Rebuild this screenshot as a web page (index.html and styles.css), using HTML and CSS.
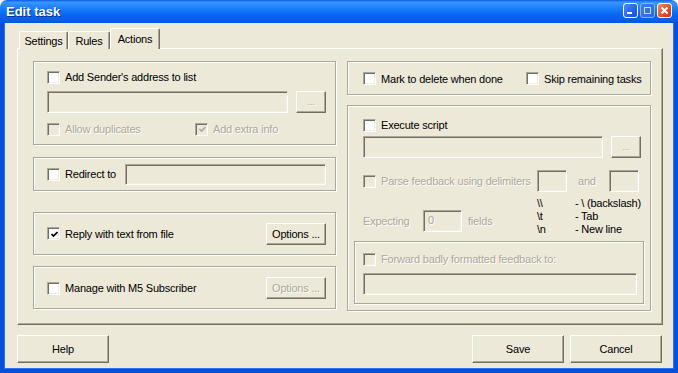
FILE: index.html
```html
<!DOCTYPE html>
<html>
<head>
<meta charset="utf-8">
<link rel="stylesheet" href="styles.css">
</head>
<body>
<div class="window">
  <div class="titlebar">
    <span class="title">Edit task</span>
    <div class="tb-buttons">
      <span class="tb-btn tb-min"><svg width="13" height="13" viewBox="0 0 13 13"><rect x="3" y="8" width="5" height="2" fill="#fff"/></svg></span>
      <span class="tb-btn tb-max"><svg width="13" height="13" viewBox="0 0 13 13"><rect x="3.5" y="3.5" width="6" height="6" fill="none" stroke="#c9d8f5" stroke-width="1"/><rect x="3" y="3" width="7" height="1" fill="#c9d8f5"/></svg></span>
      <span class="tb-btn tb-close"><svg width="13" height="13" viewBox="0 0 13 13"><path d="M3.5 3.5 L9.5 9.5 M9.5 3.5 L3.5 9.5" stroke="#fff" stroke-width="2" fill="none"/></svg></span>
    </div>
  </div>
  <div class="client">
    <div class="tabs">
      <div class="tab tab-settings">Settings</div>
      <div class="tab tab-rules">Rules</div>
      <div class="tab tab-actions active">Actions</div>
    </div>
    <div class="panel">
      <div class="col col-left">
        <div class="group g-add">
          <label class="chk"><span class="cb"></span><span>Add Sender's address to list</span></label>
          <div class="row-input">
            <span class="edit grow"></span>
            <span class="btn btn-dots dis">...</span>
          </div>
          <div class="row-opts">
            <label class="chk dis w-allow"><span class="cb"></span><span>Allow duplicates</span></label>
            <label class="chk dis"><span class="cb"><svg width="9" height="9" viewBox="0 0 9 9"><path d="M1.5 4 L3.5 6 L7.5 2" stroke="#aca899" stroke-width="1.7" fill="none"/></svg></span><span>Add extra info</span></label>
          </div>
        </div>
        <div class="group g-redirect">
          <label class="chk"><span class="cb"></span><span>Redirect to</span></label>
          <span class="edit edit-redirect"></span>
        </div>
        <div class="group g-reply">
          <label class="chk"><span class="cb en"><svg width="9" height="9" viewBox="0 0 9 9"><path d="M1.5 4 L3.5 6 L7.5 2" stroke="#000" stroke-width="1.7" fill="none"/></svg></span><span>Reply with text from file</span></label>
          <span class="btn btn-options">Options ...</span>
        </div>
        <div class="group g-manage">
          <label class="chk"><span class="cb"></span><span>Manage with M5 Subscriber</span></label>
          <span class="btn btn-options dis">Options ...</span>
        </div>
      </div>
      <div class="col col-right">
        <div class="group g-mark">
          <label class="chk w-mark"><span class="cb"></span><span>Mark to delete when done</span></label>
          <label class="chk"><span class="cb"></span><span>Skip remaining tasks</span></label>
        </div>
        <div class="group g-exec">
          <label class="chk"><span class="cb"></span><span>Execute script</span></label>
          <div class="row-input row-script">
            <span class="edit grow"></span>
            <span class="btn btn-dots dis">...</span>
          </div>
          <div class="row-parse">
            <label class="chk dis w-parse"><span class="cb"></span><span>Parse feedback using delimiters</span></label>
            <span class="edit edit-delim"></span>
            <span class="lbl dis w-and">and</span>
            <span class="edit edit-delim"></span>
          </div>
          <div class="row-expect">
            <div class="expect">
              <span class="lbl dis w-expecting">Expecting</span>
              <span class="edit edit-num dis">0</span>
              <span class="lbl dis fields">fields</span>
            </div>
            <div class="legend">
              <span>\\</span><span>- \ (backslash)</span>
              <span>\t</span><span>- Tab</span>
              <span>\n</span><span>- New line</span>
            </div>
          </div>
          <div class="group g-forward">
            <label class="chk dis"><span class="cb"></span><span>Forward badly formatted feedback to:</span></label>
            <span class="edit edit-forward"></span>
          </div>
        </div>
      </div>
    </div>
    <div class="footer">
      <span class="btn btn-foot">Help</span>
      <span class="spacer"></span>
      <span class="btn btn-foot">Save</span>
      <span class="btn btn-foot">Cancel</span>
    </div>
  </div>
</div>
</body>
</html>
```

FILE: styles.css
```css
html, body {
  margin: 0;
  padding: 0;
  background: #ffffff;
}
* { box-sizing: border-box; }

.window {
  width: 678px;
  height: 373px;
  display: flex;
  flex-direction: column;
  font-family: "Liberation Sans", Arial, sans-serif;
  font-size: 11px;
  letter-spacing: -0.2px;
  color: #000;
}

.titlebar {
  height: 23px;
  flex: none;
  display: flex;
  align-items: center;
  padding-left: 6px;
  border-radius: 7px 7px 0 0;
  background: linear-gradient(to bottom, #0a5ee0 0%, #3d95ff 10%, #2a8aff 22%, #1277f8 45%, #0766f0 65%, #0560ea 85%, #0355dc 100%);
  position: relative;
}
.title {
  color: #fff;
  font-weight: bold;
  font-size: 13px;
  letter-spacing: 0;
  text-shadow: 1px 1px 0 #0a2f8f;
}
.tb-buttons {
  margin-left: auto;
  display: flex;
  gap: 2px;
  padding-right: 6px;
  margin-top: -3px;
}
.tb-btn {
  width: 15px;
  height: 15px;
  border: 1px solid #fff;
  border-radius: 3px;
  display: flex;
  align-items: center;
  justify-content: center;
}
.tb-btn svg { display: block; }
.tb-min {
  background: linear-gradient(135deg, #4f8cff 0%, #2563ea 60%, #1a50d6 100%);
}
.tb-max {
  border-color: #8fb0ee;
  background: linear-gradient(135deg, #3f7cf0 0%, #2c66e3 100%);
}
.tb-close {
  background: linear-gradient(135deg, #f08a66 0%, #e0522a 55%, #c93b17 100%);
}

.client {
  flex: 1;
  background: #ece9d8;
  border: 4px solid #0a4fdb;
  border-top: none;
  display: flex;
  flex-direction: column;
  padding: 6px 11px 0 13px;
  box-shadow: inset 1px 0 0 #2c6ff0, inset -1px 0 0 #2c6ff0, inset 0 -1px 0 #2c6ff0;
}

/* tabs */
.tabs {
  height: 20px;
  display: flex;
  align-items: flex-end;
  padding-left: 2px;
  position: relative;
  z-index: 2;
  margin-bottom: -1px;
}
.tab {
  height: 18px;
  display: flex;
  align-items: center;
  justify-content: center;
  background: #ece9d8;
  border-top: 1px solid #fff;
  border-left: 1px solid #fff;
  border-right: 1px solid #716f64;
  border-radius: 2px 2px 0 0;
  box-shadow: inset -1px 0 0 #aca899;
  padding-top: 1px;
}
.tab-settings { width: 49px; }
.tab-rules { width: 42px; }
.tab-actions { width: 50px; }
.tab.active {
  height: 21px;
  padding-bottom: 2px;
}

.panel {
  height: 277px;
  flex: none;
  width: 646px;
  border-top: 1px solid #fff;
  border-left: 1px solid #fff;
  border-right: 1px solid #716f64;
  border-bottom: 1px solid #716f64;
  box-shadow: inset -1px -1px 0 #aca899;
  padding: 12px 0 0 15px;
  display: flex;
  gap: 11px;
}
.col { display: flex; flex-direction: column; }
.col-left { width: 303px; }
.col-right { width: 304px; }

.group {
  border: 1px solid #aca899;
  box-shadow: inset 1px 1px 0 #fff, 1px 1px 0 #fff;
  flex: none;
}
.g-add {
  height: 84px;
  margin-bottom: 12px;
  padding: 7px 9px 0 13px;
  display: flex;
  flex-direction: column;
}
.g-redirect {
  height: 34px;
  margin-bottom: 21px;
  display: flex;
  align-items: center;
  padding: 0 9px 0 13px;
}
.g-reply {
  height: 43px;
  margin-bottom: 11px;
  display: flex;
  align-items: center;
  padding: 0 9px 0 13px;
}
.g-manage {
  height: 43px;
  display: flex;
  align-items: center;
  padding: 1px 9px 0 13px;
}
.g-mark {
  height: 34px;
  margin-bottom: 10px;
  display: flex;
  align-items: center;
  padding: 1px 0 0 15px;
}
.g-exec {
  height: 206px;
  display: flex;
  flex-direction: column;
  padding: 11px 9px 6px 15px;
}
.g-forward {
  height: 63px;
  margin: 5px -3px 0 -9px;
  padding: 9px 6px 0 8px;
  display: flex;
  flex-direction: column;
}

/* controls */
.chk {
  display: flex;
  align-items: center;
  height: 16px;
  gap: 5px;
  white-space: nowrap;
  flex: none;
}
.cb {
  width: 13px;
  height: 13px;
  flex: none;
  background: #fff;
  border: 1px solid;
  border-color: #aca899 #fff #fff #aca899;
  box-shadow: inset 1px 1px 0 #716f64, inset -1px -1px 0 #f1efe2;
  display: flex;
  align-items: center;
  justify-content: center;
  padding: 1px 0 0 1px;
}
.cb svg { display: block; }
.dis { color: #aca899; text-shadow: 1px 1px 0 #fff; }
.dis .cb { background: #ece9d8; }

.edit {
  height: 22px;
  background: #ece9d8;
  border: 1px solid;
  border-color: #aca899 #fff #fff #aca899;
  box-shadow: inset 1px 1px 0 #716f64, inset -1px -1px 0 #f1efe2;
  flex: none;
}
.edit.grow { flex: 1; }

.btn {
  display: flex;
  align-items: center;
  justify-content: center;
  background: #ece9d8;
  border: 1px solid;
  border-color: #fff #716f64 #716f64 #fff;
  box-shadow: inset -1px -1px 0 #aca899;
  white-space: nowrap;
  flex: none;
}
.btn-dots {
  width: 30px;
  height: 22px;
  font-size: 9px;
  padding-bottom: 1px;
}
.btn-options {
  width: 60px;
  height: 22px;
  margin-left: auto;
}

.row-input {
  display: flex;
  gap: 8px;
  margin-top: 6px;
  height: 22px;
}
.row-opts {
  display: flex;
  margin-top: 8px;
}
.w-allow { width: 148px; }

.edit-redirect {
  margin-left: auto;
  width: 201px;
  height: 21px;
  margin-top: 1px;
}

.w-mark { width: 163px; }

.row-script { margin-top: 3px; }
.row-parse {
  display: flex;
  align-items: center;
  margin-top: 12px;
  height: 22px;
}
.w-parse { width: 174px; }
.edit-delim { width: 30px; height: 22px; }
.lbl { white-space: nowrap; }
.w-and { width: 42px; padding-left: 11px; }

.row-expect {
  display: flex;
  margin-top: 5px;
  height: 39px;
}
.expect {
  width: 174px;
  display: flex;
  align-items: center;
  align-self: flex-end;
  margin-bottom: 4px;
}
.w-expecting { width: 60px; }
.edit-num {
  width: 39px;
  padding: 2px 0 0 4px;
  line-height: 14px;
}
.fields { margin-left: 6px; }
.legend {
  display: grid;
  grid-template-columns: 38px auto;
  grid-auto-rows: 13px;
  line-height: 13px;
  white-space: nowrap;
}
.edit-forward {
  margin-top: 6px;
  height: 22px;
}

.footer {
  display: flex;
  margin-top: 10px;
  height: 28px;
  gap: 6px;
  padding-right: 1px;
}
.spacer { flex: 1; }
.btn-foot { width: 92px; height: 28px; }
```
